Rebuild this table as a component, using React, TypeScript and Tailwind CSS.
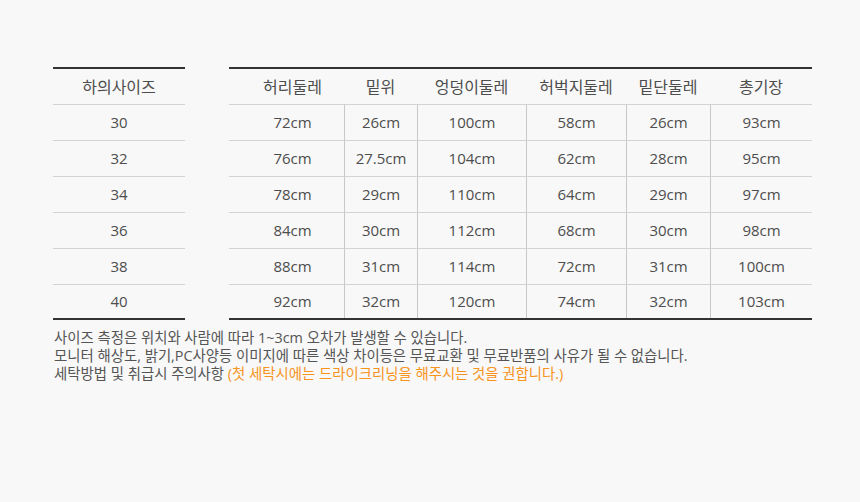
const sizes = ["30", "32", "34", "36", "38", "40"]

const headers = ["허리둘레", "밑위", "엉덩이둘레", "허벅지둘레", "밑단둘레", "총기장"]
const widths = ["w-[115px] pl-3", "w-[73px]", "w-[109px]", "w-[100px]", "w-[84px]", "w-[102px]"]

const rows = [
  ["72cm", "26cm", "100cm", "58cm", "26cm", "93cm"],
  ["76cm", "27.5cm", "104cm", "62cm", "28cm", "95cm"],
  ["78cm", "29cm", "110cm", "64cm", "29cm", "97cm"],
  ["84cm", "30cm", "112cm", "68cm", "30cm", "98cm"],
  ["88cm", "31cm", "114cm", "72cm", "31cm", "100cm"],
  ["92cm", "32cm", "120cm", "74cm", "32cm", "103cm"],
]

export default function App() {
  return (
    <div
      className="w-[860px] h-[502px] bg-[#f8f8f8] text-[#4d4d4d] pt-[67px] pl-[53px]"
      style={{ fontFamily: "'Open Sans', 'Noto Sans CJK KR', sans-serif" }}
    >
      <div className="flex gap-[44px]">
        {/* size column */}
        <div className="w-[132px] border-t-2 border-b-2 border-[#333] text-[15px]">
          <div className="h-[36px] flex items-center justify-center border-b border-[#d4d4d4] text-[16px]">하의사이즈</div>
          {sizes.map((s, i) => (
            <div
              key={s}
              className={`flex items-center justify-center ${i < sizes.length - 1 ? "h-[36px] border-b border-[#d4d4d4]" : "h-[33px]"}`}
            >
              {s}
            </div>
          ))}
        </div>

        {/* measurements */}
        <div className="w-[583px] border-t-2 border-b-2 border-[#333] text-[15px]">
          <div className="h-[36px] flex border-b border-[#d4d4d4] text-[16px]">
            {headers.map((h, i) => (
              <div key={h} className={`${widths[i]} flex items-center justify-center`}>
                {h}
              </div>
            ))}
          </div>
          {rows.map((r, ri) => (
            <div key={ri} className={`flex ${ri < rows.length - 1 ? "h-[36px] border-b border-[#d4d4d4]" : "h-[33px]"}`}>
              {r.map((v, i) => (
                <div
                  key={i}
                  className={`${widths[i]} flex items-center justify-center ${i > 0 ? "border-l border-[#c8c8c8]" : ""}`}
                >
                  {v}
                </div>
              ))}
            </div>
          ))}
        </div>
      </div>

      <div className="mt-[9px] pl-px text-[14.4px] leading-[18px] text-[#555]">
        <p>사이즈 측정은 위치와 사람에 따라 1~3cm 오차가 발생할 수 있습니다.</p>
        <p>모니터 해상도, 밝기,PC사양등 이미지에 따른 색상 차이등은 무료교환 및 무료반품의 사유가 될 수 없습니다.</p>
        <p>
          세탁방법 및 취급시 주의사항 <span className="text-[#f7941d]">(첫 세탁시에는 드라이크리닝을 해주시는 것을 권합니다.)</span>
        </p>
      </div>
    </div>
  )
}
